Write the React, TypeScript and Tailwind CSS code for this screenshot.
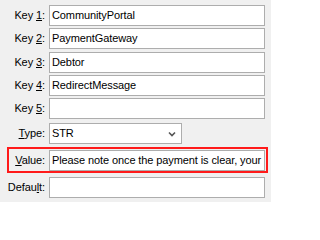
import type { ReactNode } from 'react';

function Label({ children, width = 'w-[45px]' }: { children: ReactNode; width?: string }) {
  return <div className={`shrink-0 text-right ${width}`}>{children}</div>;
}

function Box({ value }: { value?: string }) {
  return (
    <div className="h-[21px] w-[216px] shrink-0 overflow-hidden whitespace-nowrap border border-[#adadad] bg-white pl-[2px] leading-[19px] text-black">
      {value}
    </div>
  );
}

const keys = [
  { n: '1', v: 'CommunityPortal', mt: 'mt-[5px]' },
  { n: '2', v: 'PaymentGateway', mt: 'mt-[2px]' },
  { n: '3', v: 'Debtor', mt: 'mt-[3px]' },
  { n: '4', v: 'RedirectMessage', mt: 'mt-[2px]' },
  { n: '5', v: '', mt: 'mt-[2px]' },
];

export default function App() {
  return (
    <div
      className="flex h-[202px] w-[271px] flex-col overflow-hidden bg-[#f0f0f0] text-[11px] tracking-[-0.1px] text-black"
      style={{ fontFamily: '"Liberation Sans", Arial, sans-serif' }}
    >
      {keys.map((k) => (
        <div key={k.n} className={`flex items-center gap-[4px] ${k.mt}`}>
          <Label>
            Key <span className="underline">{k.n}</span>:
          </Label>
          <Box value={k.v} />
        </div>
      ))}

      <div className="mt-[4px] flex items-center gap-[4px]">
        <Label>
          <span className="underline">T</span>ype:
        </Label>
        <div className="relative h-[21px] w-[133px] border border-[#adadad] bg-white pl-[2px] leading-[19px]">
          STR
          <svg
            className="absolute right-[5px] top-[7px]"
            width="8"
            height="6"
            viewBox="0 0 8 6"
            fill="none"
            stroke="#555"
            strokeWidth="1.6"
          >
            <path d="M1 1.5 L4 4.5 L7 1.5" />
          </svg>
        </div>
      </div>

      <div className="ml-[7px] mt-[3px] flex h-[26px] w-[261px] items-center gap-[4px] border-2 border-[#ff1a1a]">
        <Label width="w-[36px]">
          <span className="underline">V</span>alue:
        </Label>
        <Box value="Please note once the payment is clear, your" />
      </div>

      <div className="mt-[4px] flex items-center gap-[4px]">
        <Label>
          Defau<span className="underline">l</span>t:
        </Label>
        <Box />
      </div>
    </div>
  );
}
